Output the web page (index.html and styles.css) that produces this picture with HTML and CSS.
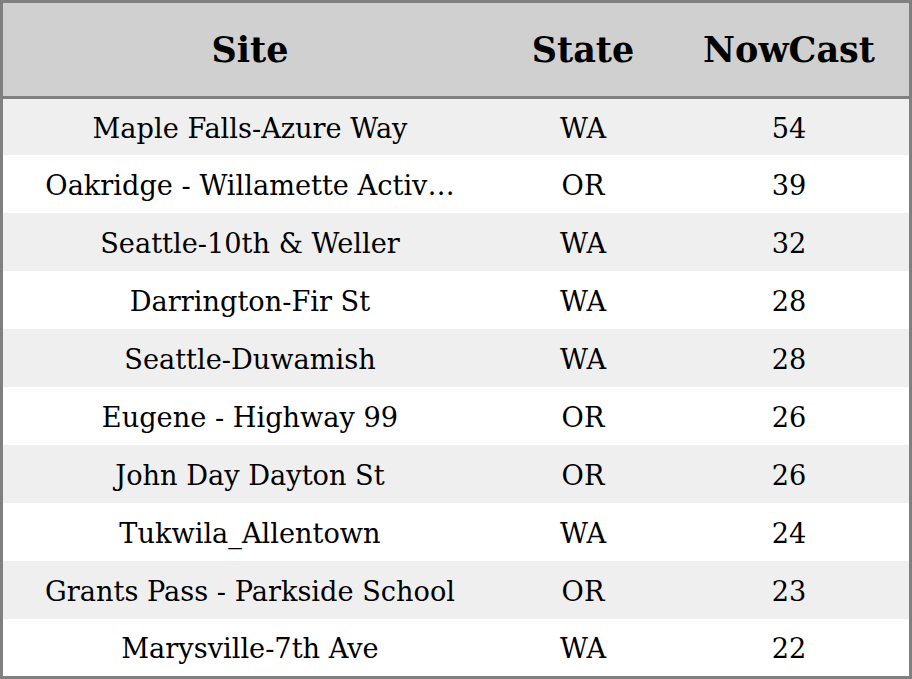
FILE: index.html
```html
<!DOCTYPE html>
<html>
<head>
<meta charset="utf-8">
<link rel="stylesheet" href="styles.css">
</head>
<body>
<div class="frame">
  <table class="grid">
    <colgroup>
      <col class="c-site">
      <col class="c-state">
      <col class="c-now">
    </colgroup>
    <thead>
      <tr><th>Site</th><th>State</th><th>NowCast</th></tr>
    </thead>
    <tbody>
      <tr class="first"><td>Maple Falls-Azure Way</td><td>WA</td><td>54</td></tr>
      <tr><td>Oakridge - Willamette Activ…</td><td>OR</td><td>39</td></tr>
      <tr><td>Seattle-10th &amp; Weller</td><td>WA</td><td>32</td></tr>
      <tr><td>Darrington-Fir St</td><td>WA</td><td>28</td></tr>
      <tr><td>Seattle-Duwamish</td><td>WA</td><td>28</td></tr>
      <tr><td>Eugene - Highway 99</td><td>OR</td><td>26</td></tr>
      <tr><td>John Day Dayton St</td><td>OR</td><td>26</td></tr>
      <tr><td>Tukwila_Allentown</td><td>WA</td><td>24</td></tr>
      <tr><td>Grants Pass - Parkside School</td><td>OR</td><td>23</td></tr>
      <tr class="last"><td>Marysville-7th Ave</td><td>WA</td><td>22</td></tr>
    </tbody>
  </table>
</div>
</body>
</html>
```
FILE: styles.css
```css
html, body {
  margin: 0;
  padding: 0;
  background: #ffffff;
}
.frame {
  width: 912px;
  height: 679px;
  box-sizing: border-box;
  border: 3px solid #808080;
  overflow: hidden;
}
.grid {
  width: 906px;
  border-collapse: collapse;
  border-spacing: 0;
  table-layout: fixed;
  font-family: "DejaVu Serif", serif;
  color: #000;
}
.c-site { width: 494px; }
.c-state { width: 172px; }
.c-now { width: 240px; }
.grid th {
  height: 93px;
  padding: 0;
  background: #d0d0d0;
  border-bottom: 3px solid #808080;
  font-size: 35px;
  font-weight: bold;
  text-align: center;
  vertical-align: middle;
}
.grid td {
  height: 56px;
  padding: 2px 0 0;
  font-size: 27.2px;
  text-align: center;
  vertical-align: middle;
  white-space: nowrap;
}
.grid tr.first td { height: 54px; }
.grid tr.last td { height: 55px; }
.grid tbody tr:nth-child(odd) { background: #efefef; }
.grid tbody tr:nth-child(even) { background: #ffffff; }
```
